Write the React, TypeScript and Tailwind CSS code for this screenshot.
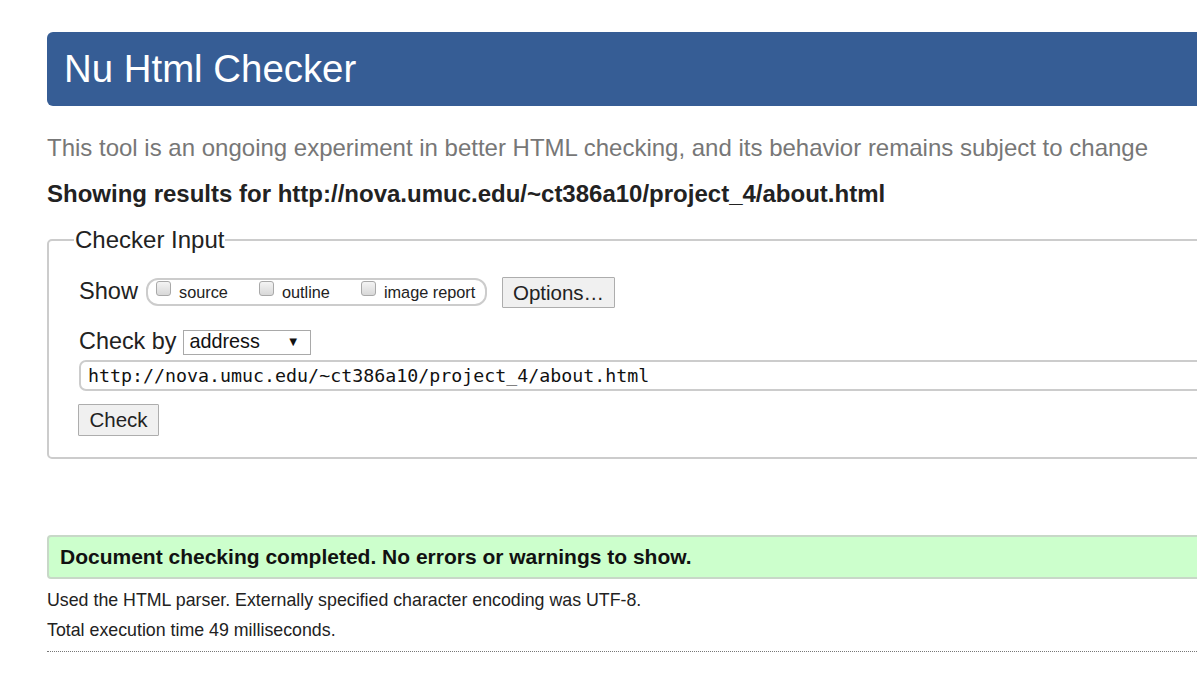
import React from "react";

function Box() {
  return (
    <span className="inline-block w-[15px] h-[15px] rounded-[3px] border border-[#a9a9a9] bg-gradient-to-b from-[#f4f4f4] to-[#d8d8d8] mr-[8px] relative top-[-4px]" />
  );
}

export default function App() {
  return (
    <div className="w-[1197px] h-[673px] overflow-hidden bg-white" style={{ fontFamily: '"Liberation Sans", Arial, sans-serif' }}>
      <div className="ml-[47px] w-[1300px] pt-[32px]">
        <div className="h-[74px] bg-[#365d95] rounded-[6px] flex items-center pl-[17px]">
          <h1 className="text-white text-[38.4px] leading-none">Nu Html Checker</h1>
        </div>
        <p className="text-[#777777] text-[24px] leading-none mt-[30px]">
          This tool is an ongoing experiment in better HTML checking, and its behavior remains subject to change
        </p>
        <p className="text-[#222] font-bold text-[24px] leading-none mt-[22px]">
          Showing results for http://nova.umuc.edu/~ct386a10/project_4/about.html
        </p>
        <fieldset className="mt-[22px] border-2 border-[#cccccc] rounded-[5px] pl-[30px] pr-4 pt-[6px] pb-[21px] min-w-0">
          <legend className="text-[24px] text-[#222] px-[1px] ml-[-5px] leading-none">Checker Input</legend>
          <div className="flex items-center mt-[19px] h-[30px]">
            <span className="text-[23.6px] text-[#222] mr-[8px]">Show</span>
            <span className="flex items-center h-[28px] w-[341px] border-2 border-[#cccccc] rounded-[12px] pl-[8px] text-[16.3px] text-[#222]">
              <Box />
              <span className="mr-[31px]">source</span>
              <Box />
              <span className="mr-[31px]">outline</span>
              <Box />
              <span>image report</span>
            </span>
            <button className="ml-[15px] h-[31px] w-[113px] border border-[#adadad] bg-[#f0f0f0] text-[20.5px] text-[#222] rounded-[1px]">
              Options…
            </button>
          </div>
          <div className="flex items-center mt-[22px] h-[26px]">
            <span className="text-[23.4px] text-[#222] mr-[6px]">Check by</span>
            <span className="flex items-center justify-between h-[25px] w-[128px] border border-[#a9a9a9] bg-white pl-[6px] pr-[10px] text-[19.8px] text-[#111]">
              <span>address</span>
              <span className="text-[13px]">▼</span>
            </span>
          </div>
          <div className="mt-[5px] h-[31px] w-[1200px] border-2 border-[#cccccc] rounded-[7px] flex items-center pl-[7px] text-[18.3px] text-[#111]" style={{ fontFamily: '"DejaVu Sans Mono", "Liberation Mono", monospace' }}>
            http://nova.umuc.edu/~ct386a10/project_4/about.html
          </div>
          <button className="mt-[13px] h-[32px] w-[81px] border border-[#adadad] bg-[#f0f0f0] text-[20.5px] text-[#222] rounded-[1px] ml-[-1px]">
            Check
          </button>
        </fieldset>
        <div className="mt-[76px] h-[44px] border-2 border-[#c8d8c8] rounded-[4px] bg-[#ccffcc] flex items-center pl-[11px]">
          <span className="font-bold text-[21px] text-[#111]">Document checking completed. No errors or warnings to show.</span>
        </div>
        <p className="text-[#222] text-[17.8px] leading-none mt-[13px]">Used the HTML parser. Externally specified character encoding was UTF-8.</p>
        <p className="text-[#222] text-[17.8px] leading-none mt-[12px]">Total execution time 49 milliseconds.</p>
        <div className="mt-[11px] border-b border-dotted border-[#777]" />
      </div>
    </div>
  );
}
